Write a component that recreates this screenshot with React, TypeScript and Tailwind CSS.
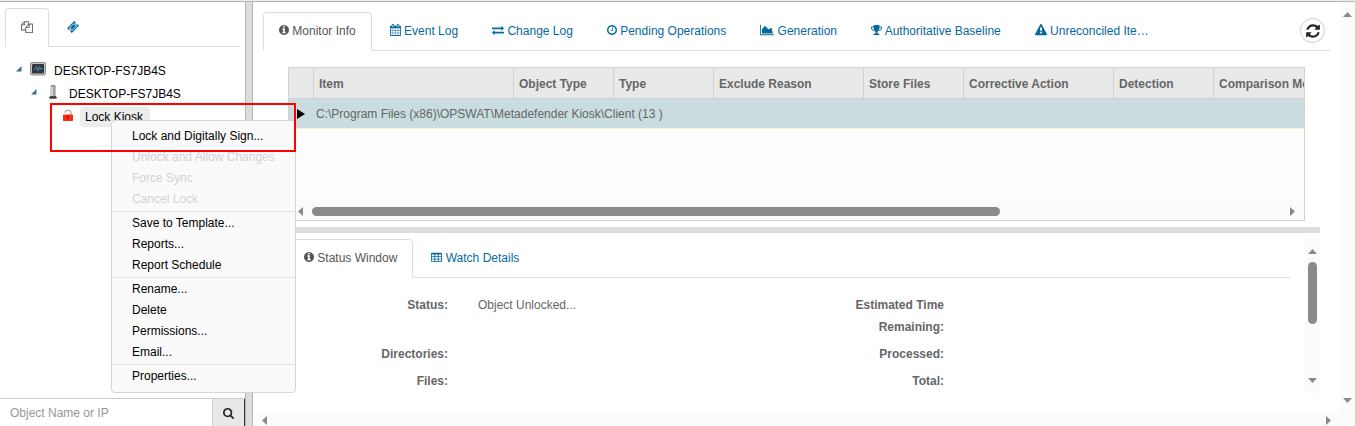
import type { ReactNode } from "react"
import clsx from "clsx"

// Font Awesome 4 outlines, which react-icons no longer ships
const icons = {
  info: {
    box: "128 0 1536 1792",
    size: "w-[10px]",
    d: "M1152 1376v-160q0-14-9-23t-23-9h-96v-512q0-14-9-23t-23-9h-320q-14 0-23 9t-9 23v160q0 14 9 23t23 9h96v320h-96q-14 0-23 9t-9 23v160q0 14 9 23t23 9h448q14 0 23-9t9-23zm-128-896v-160q0-14-9-23t-23-9h-192q-14 0-23 9t-9 23v160q0 14 9 23t23 9h192q14 0 23-9t9-23zm640 416q0 209-103 385.5t-279.5 279.5-385.5 103-385.5-103-279.5-279.5-103-385.5 103-385.5 279.5-279.5 385.5-103 385.5 103 279.5 279.5 103 385.5z",
  },
  calendar: {
    box: "64 0 1664 1792",
    size: "w-[11px]",
    d: "M192 1664h288v-288h-288v288zm352 0h320v-288h-320v288zm-352-352h288v-320h-288v320zm352 0h320v-320h-320v320zm-352-384h288v-288h-288v288zm736 736h320v-288h-320v288zm-384-736h320v-288h-320v288zm768 736h288v-288h-288v288zm-384-352h320v-320h-320v320zm-352-864v-288q0-13-9.5-22.5t-22.5-9.5h-64q-13 0-22.5 9.5t-9.5 22.5v288q0 13 9.5 22.5t22.5 9.5h64q13 0 22.5-9.5t9.5-22.5zm736 864h288v-320h-288v320zm-384-384h320v-288h-320v288zm384 0h288v-288h-288v288zm32-480v-288q0-13-9.5-22.5t-22.5-9.5h-64q-13 0-22.5 9.5t-9.5 22.5v288q0 13 9.5 22.5t22.5 9.5h64q13 0 22.5-9.5t9.5-22.5zm384-64v1280q0 52-38 90t-90 38h-1408q-52 0-90-38t-38-90v-1280q0-52 38-90t90-38h128v-96q0-66 47-113t113-47h64q66 0 113 47t47 113v96h384v-96q0-66 47-113t113-47h64q66 0 113 47t47 113v96h128q52 0 90 38t38 90z",
  },
  exchange: {
    box: "0 0 1792 1792",
    size: "w-[12px]",
    d: "M1792 1184v192q0 13-9.5 22.5t-22.5 9.5h-1376v192q0 13-9.5 22.5t-22.5 9.5q-12 0-24-10l-319-320q-9-9-9-22 0-14 9-23l320-320q9-9 23-9 13 0 22.5 9.5t9.5 22.5v192h1376q13 0 22.5 9.5t9.5 22.5zm0-544q0 14-9 23l-320 320q-9 9-23 9-13 0-22.5-9.5t-9.5-22.5v-192h-1376q-13 0-22.5-9.5t-9.5-22.5v-192q0-13 9.5-22.5t22.5-9.5h1376v-192q0-14 9-23t23-9q12 0 24 10l319 319q9 9 9 23z",
  },
  clock: {
    box: "128 0 1536 1792",
    size: "w-[10px]",
    d: "M1024 544v448q0 14-9 23t-23 9h-320q-14 0-23-9t-9-23v-64q0-14 9-23t23-9h224v-352q0-14 9-23t23-9h64q14 0 23 9t9 23zm416 352q0-148-73-273t-198-198-273-73-273 73-198 198-73 273 73 273 198 198 273 73 273-73 198-198 73-273zm224 0q0 209-103 385.5t-279.5 279.5-385.5 103-385.5-103-279.5-279.5-103-385.5 103-385.5 279.5-279.5 385.5-103 385.5 103 279.5 279.5 103 385.5z",
  },
  area: {
    box: "0 0 2048 1792",
    size: "w-[14px]",
    d: "M2048 1536v128h-2048v-1536h128v1408h1920zm-384-1024l256 896h-1664v-576l448-576 576 576z",
  },
  trophy: {
    box: "64 0 1664 1792",
    size: "w-[11px]",
    d: "M522 883q-74-162-74-371h-256v96q0 78 94.5 162t235.5 113zm1078-275v-96h-256q0 209-74 371 141-29 235.5-113t94.5-162zm128-128v128q0 71-41.5 143t-112 130-173 97.5-215.5 44.5q-42 54-95 95-38 34-52.5 72.5t-14.5 89.5q0 54 30.5 91t97.5 37q75 0 133.5 45.5t58.5 114.5v64q0 14-9 23t-23 9h-832q-14 0-23-9t-9-23v-64q0-69 58.5-114.5t133.5-45.5q67 0 97.5-37t30.5-91q0-51-14.5-89.5t-52.5-72.5q-53-41-95-95-113-5-215.5-44.5t-173-97.5-112-130-41.5-143v-128q0-40 28-68t68-28h288v-96q0-66 47-113t113-47h576q66 0 113 47t47 113v96h288q40 0 68 28t28 68z",
  },
  warning: {
    box: "0 0 1792 1792",
    size: "w-[12px]",
    d: "M1024 1375v-190q0-14-9.5-23.5t-22.5-9.5h-192q-13 0-22.5 9.5t-9.5 23.5v190q0 14 9.5 23.5t22.5 9.5h192q13 0 22.5-9.5t9.5-23.5zm-2-374l18-459q0-12-10-19-13-11-24-11h-220q-11 0-24 11-10 7-10 21l17 457q0 10 10 16.5t24 6.5h185q14 0 23.5-6.5t10.5-16.5zm-14-934l768 1408q35 63-2 126-17 29-46.5 46t-63.5 17h-1536q-34 0-63.5-17t-46.5-46q-37-63-2-126l768-1408q17-31 47-49t65-18 65 18 47 49z",
  },
  table: {
    box: "64 0 1664 1792",
    size: "w-[11px]",
    d: "M224 256h1344q160 0 160 160v1088q0 160-160 160h-1344q-160 0-160-160v-1088q0-160 160-160zM192 512v256h384v-256zM704 512v256h384v-256zM1216 512v256h384v-256zM192 896v256h384v-256zM704 896v256h384v-256zM1216 896v256h384v-256zM192 1280v256h384v-256zM704 1280v256h384v-256zM1216 1280v256h384v-256z",
  },
  refresh: {
    box: "128 0 1536 1792",
    size: "w-[14px]",
    d: "M1639 1056q0 5-1 7-64 268-268 434.5t-478 166.5q-146 0-282.5-55t-243.5-157l-129 129q-19 19-45 19t-45-19-19-45v-448q0-26 19-45t45-19h448q26 0 45 19t19 45-19 45l-137 137q71 66 161 102t187 36q134 0 250-65t186-179q11-17 53-117 8-23 30-23h192q13 0 22.5 9.5t9.5 22.5zm25-800v448q0 26-19 45t-45 19h-448q-26 0-45-19t-19-45 19-45l138-138q-148-137-349-137-134 0-250 65t-186 179q-11 17-53 117-8 23-30 23h-199q-13 0-22.5-9.5t-9.5-22.5v-7q65-268 270-434.5t480-166.5q146 0 284 55.5t245 156.5l130-129q19-19 45-19t45 19 19 45z",
  },
  search: {
    box: "64 0 1664 1792",
    size: "w-[11px]",
    d: "M1216 832q0-185-131.5-316.5t-316.5-131.5-316.5 131.5-131.5 316.5 131.5 316.5 316.5 131.5 316.5-131.5 131.5-316.5zm512 832q0 52-38 90t-90 38q-54 0-90-38l-343-342q-179 124-399 124-143 0-273.5-55.5t-225-150-150-225-55.5-273.5 55.5-273.5 150-225 225-150 273.5-55.5 273.5 55.5 225 150 150 225 55.5 273.5q0 220-124 399l343 343q37 37 37 90z",
  },
  files: {
    box: "0 0 1792 1792",
    size: "w-[12px]",
    d: "M1696 384q40 0 68 28t28 68v1216q0 40-28 68t-68 28h-960q-40 0-68-28t-28-68v-288h-544q-40 0-68-28t-28-68v-672q0-40 20-88t48-76l408-408q28-28 76-48t88-20h416q40 0 68 28t28 68v328q68-40 128-40h416zm-544 213l-299 299h299v-299zm-640-384l-299 299h299v-299zm196 647l316-316v-416h-384v416q0 40-28 68t-68 28h-416v640h512v-256q0-40 20-88t48-76zm956 804v-1152h-384v416q0 40-28 68t-68 28h-416v640h896z",
  },
  ticket: {
    box: "0 0 1792 1792",
    size: "w-[12px]",
    d: "M1024 452l316 316-572 572-316-316zm-211 979l618-618q19-19 19-45t-19-45l-362-362q-18-18-45-18t-45 18l-618 618q-19 19-19 45t19 45l362 362q18 18 45 18t45-18zm889-637l-907 908q-37 37-90.5 37t-90.5-37l-126-126q56-56 56-136t-56-136-136-56-136 56l-125-126q-37-37-37-90.5t37-90.5l907-906q37-37 90.5-37t90.5 37l125 125q-56 56-56 136t56 136 136 56 136-56l126 125q37 37 37 90.5t-37 90.5z",
  },
}

type IconName = keyof typeof icons

function Icon({ name, className = "h-3" }: { name: IconName; className?: string }) {
  const icon = icons[name]
  return (
    <svg viewBox={icon.box} className={clsx("inline-block shrink-0 fill-current", icon.size, className)} aria-hidden="true">
      <path fillRule="evenodd" d={icon.d} />
    </svg>
  )
}

function Tab({ icon, label, active }: { icon: IconName; label: string; active?: boolean }) {
  return (
    <button
      type="button"
      role="tab"
      aria-selected={!!active}
      className={clsx(
        "-mb-px h-[39px] rounded-t border px-[15px] pb-[2px] whitespace-nowrap",
        active ? "border-[#ddd] border-b-white bg-white text-[#555]" : "border-transparent text-[#0769a0]"
      )}
    >
      <Icon name={icon} className="h-3 align-[-1px]" /> {label}
    </button>
  )
}

function Arrow({ dir }: { dir: "up" | "down" | "left" | "right" }) {
  const vertical = dir === "up" || dir === "down"
  const points = {
    up: "0,5 9,5 4.5,0",
    down: "0,0 9,0 4.5,5",
    left: "5,0 5,9 0,4.5",
    right: "0,0 0,9 5,4.5",
  }
  return (
    <svg
      viewBox={vertical ? "0 0 9 5" : "0 0 5 9"}
      className={clsx("shrink-0 fill-[#8a8a8a]", vertical ? "h-[5px] w-[9px]" : "h-[9px] w-[5px]")}
      aria-hidden="true"
    >
      <polygon points={points[dir]} />
    </svg>
  )
}

function Expander() {
  return (
    <svg viewBox="0 0 6 6" className="h-[6px] w-[6px] shrink-0 -translate-y-[2px]" aria-hidden="true">
      <path d="M5.5 0v5.5H0z" fill="#3f6f8c" />
    </svg>
  )
}

function MonitorIcon() {
  return (
    <svg viewBox="0 0 16 14" className="h-[14px] w-[16px] shrink-0 -translate-y-[2px]" aria-hidden="true">
      <rect x=".5" y=".5" width="15" height="12.500" rx="1.5" fill="#c4c4c4" stroke="#8d8d8d" />
      <rect x="2" y="2" width="12" height="9.5" rx="1" fill="#33383c" />
      <path d="M4 7h1.500l1-2.500 1.500 4.500 1.500-4.500 1 3 .5-1H12.500" fill="none" stroke="#4a86ad" />
    </svg>
  )
}

function ServerIcon() {
  return (
    <svg viewBox="0 0 8 14" className="h-[14px] w-[8px] shrink-0 -translate-y-[2px]" aria-hidden="true">
      <path d="M1.500 1l1-1h3.500l.7 1v11H1.500z" fill="#a3a3a3" />
      <path d="M2 1.500h2V11H2z" fill="#cfcfcf" />
      <path d="M2 .3h4v1.200H2z" fill="#8a8a8a" />
      <path d="M0 12.500l1.500-1.500h5L8 12.500l-.8 1.200H.8z" fill="#444" />
    </svg>
  )
}

function UnlockIcon() {
  return (
    <svg viewBox="0 0 10 12" className="h-[12px] w-[10px] shrink-0 -translate-y-[2px]" aria-hidden="true">
      <path d="M2 3.800C2 .4 8 .4 8 3.600V6" fill="none" stroke="#b5b5b5" strokeWidth="1.500" />
      <rect x="0" y="5.500" width="10" height="6.500" rx=".8" fill="#fb2c0c" />
      <circle cx="5" cy="8" r="1" fill="#8c1a08" />
      <path d="M4.600 8h.8v2.300h-.8z" fill="#8c1a08" />
    </svg>
  )
}

const menuGroups = [
  [
    { label: "Lock and Digitally Sign..." },
    { label: "Unlock and Allow Changes", disabled: true },
    { label: "Force Sync", disabled: true },
    { label: "Cancel Lock", disabled: true },
  ],
  [{ label: "Save to Template..." }, { label: "Reports..." }, { label: "Report Schedule" }],
  [{ label: "Rename..." }, { label: "Delete" }, { label: "Permissions..." }, { label: "Email..." }],
  [{ label: "Properties..." }],
]

function ContextMenu() {
  return (
    <div
      role="menu"
      className="absolute top-[120px] left-[111px] z-10 w-[185px] rounded border border-[#d5d5d5] bg-[#fafafa] px-px pt-[4px] pb-[6px]"
    >
      {menuGroups.map((group, i) => (
        <div key={i} className={clsx(i > 0 && "mt-[2px] border-t border-[#e2e2e2]")}>
          {group.map((item: { label: string; disabled?: boolean }) => (
            <button
              key={item.label}
              type="button"
              role="menuitem"
              disabled={item.disabled}
              className="block h-[21px] w-full pl-[19px] text-left whitespace-nowrap text-black disabled:text-[#d3d3d3]"
            >
              {item.label}
            </button>
          ))}
        </div>
      ))}
    </div>
  )
}

function Sidebar() {
  return (
    <aside className="flex w-[245px] shrink-0 flex-col">
      <div role="tablist" className="mt-[6px] mr-[6px] ml-[5px] flex border-b border-[#ddd]">
        <button
          type="button"
          role="tab"
          aria-selected="true"
          aria-label="Objects"
          className="-mb-px flex h-[39px] w-[44px] items-center justify-center rounded-t border border-[#ddd] border-b-white pb-[2px] text-[#555]"
        >
          <Icon name="files" />
        </button>
        <button
          type="button"
          role="tab"
          aria-selected="false"
          aria-label="Tickets"
          className="ml-[2px] flex h-[37px] w-[44px] items-center justify-center text-[#0769a0]"
        >
          <Icon name="ticket" />
        </button>
      </div>

      <ul role="tree" className="mt-[12px] flex-1 text-black">
        <li role="treeitem" className="flex h-[23px] items-center pl-[16px]">
          <Expander />
          <span className="ml-[8px] flex items-center gap-[8px]">
            <MonitorIcon />
            DESKTOP-FS7JB4S
          </span>
        </li>
        <li role="treeitem" className="flex h-[23px] items-center pl-[31px]">
          <Expander />
          <span className="ml-[12px] flex items-center gap-[12px]">
            <ServerIcon />
            DESKTOP-FS7JB4S
          </span>
        </li>
        <li role="treeitem" aria-selected="true" className="flex h-[23px] items-center pl-[63px]">
          <UnlockIcon />
          <span className="ml-[7px] rounded bg-[#ececec] pr-[7px] pl-[5px] leading-5">Lock Kiosk</span>
        </li>
      </ul>

      <form className="flex h-[28px] border-t border-[#ccc]">
        <input
          type="text"
          aria-label="Object Name or IP"
          placeholder="Object Name or IP"
          className="min-w-0 flex-1 bg-white px-[10px] outline-none placeholder:text-[#999]"
        />
        <button
          type="button"
          aria-label="Search"
          className="flex w-[33px] items-center justify-center border-r border-l border-r-[#333] border-l-[#ccc] bg-[#e8e8e8] text-[#222]"
        >
          <Icon name="search" />
        </button>
      </form>
    </aside>
  )
}

const columns = [
  { label: "", width: "w-[25px]" },
  { label: "Item", width: "w-[200px]" },
  { label: "Object Type", width: "w-[100px]" },
  { label: "Type", width: "w-[100px]" },
  { label: "Exclude Reason", width: "w-[150px]" },
  { label: "Store Files", width: "w-[100px]" },
  { label: "Corrective Action", width: "w-[150px]" },
  { label: "Detection", width: "w-[100px]" },
  { label: "Comparison Method", width: "w-[150px]" },
]

function ItemGrid() {
  return (
    <div className="flex h-[154px] flex-col overflow-hidden border border-[#d0d0d0] bg-[#fdfdfd]">
      <div className="flex-1 overflow-hidden">
        <table className="w-[1075px] table-fixed border-separate border-spacing-0">
          <thead>
            <tr className="h-[31px] bg-[#e9e9e9]">
              {columns.map((col) => (
                <th
                  key={col.label}
                  className={clsx(
                    "border-r border-b border-[#d0d0d0] pt-[2px] pl-[5px] text-left whitespace-nowrap",
                    col.width
                  )}
                >
                  {col.label}
                </th>
              ))}
            </tr>
          </thead>
          <tbody>
            <tr className="h-[30px] bg-[#c9dce0]">
              <td colSpan={9} className="border-b border-[#f5f5d5] pl-[8px]">
                <div className="flex items-center gap-[11px]">
                  <svg viewBox="0 0 8 10" className="h-[10px] w-[8px] fill-black" aria-hidden="true">
                    <polygon points="0,0 8,5 0,10" />
                  </svg>
                  C:\Program Files (x86)\OPSWAT\Metadefender Kiosk\Client (13 )
                </div>
              </td>
            </tr>
          </tbody>
        </table>
      </div>
      <div className="flex h-[17px] items-center bg-[#fbfbfb] pr-[9px] pl-[9px]">
        <Arrow dir="left" />
        <div className="mx-[9px] flex-1">
          <div className="h-[9px] w-[71%] rounded-full bg-[#8a8a8a]" />
        </div>
        <Arrow dir="right" />
      </div>
    </div>
  )
}

function Label({ children }: { children: ReactNode }) {
  return <dt className="pr-[15px] pl-[55px] text-right font-bold">{children}</dt>
}

function StatusPane() {
  return (
    <div className="mt-[6px] flex h-[154px]">
      <div className="min-w-0 flex-1">
        <div role="tablist" className="mr-[15px] flex gap-[2px] border-b border-[#ddd]">
          <Tab icon="info" label="Status Window" active />
          <Tab icon="table" label="Watch Details" />
        </div>
        <dl className="mt-[16px] mr-[25px] grid grid-cols-[175px_1fr_175px_1fr] gap-y-[5px] leading-[22px]">
          <Label>Status:</Label>
          <dd className="pl-[15px]">Object Unlocked...</dd>
          <Label>Estimated Time Remaining:</Label>
          <dd />
          <Label>Directories:</Label>
          <dd />
          <Label>Processed:</Label>
          <dd />
          <Label>Files:</Label>
          <dd />
          <Label>Total:</Label>
          <dd />
        </dl>
      </div>
      <div className="flex w-[15px] flex-col items-center bg-[#fbfbfb] pt-[10px] pb-[10px]">
        <Arrow dir="up" />
        <div className="mt-[8px] flex-1">
          <div className="h-[62px] w-[9px] rounded-full bg-[#8a8a8a]" />
        </div>
        <Arrow dir="down" />
      </div>
    </div>
  )
}

export default function App() {
  return (
    <div className="relative flex h-screen flex-col overflow-hidden bg-white font-['Liberation_Sans',Arial,sans-serif] text-xs text-[#666]">
      <div className="h-[2px] shrink-0 border-b border-[#b8b8b8] bg-[#ececec]" />
      <div className="flex min-h-0 flex-1">
        <Sidebar />
        <div className="w-[8px] shrink-0 border-x border-[#b5b5b5] bg-[#ddd]" />

        <main className="flex min-w-0 flex-1">
          <div className="flex min-w-0 flex-1 flex-col">
            <div className="min-h-0 flex-1 overflow-hidden pt-[10px] pr-[10px] pl-[10px]">
              <div role="tablist" className="flex gap-[2px] border-b border-[#ddd]">
                <Tab icon="info" label="Monitor Info" active />
                <Tab icon="calendar" label="Event Log" />
                <Tab icon="exchange" label="Change Log" />
                <Tab icon="clock" label="Pending Operations" />
                <Tab icon="area" label="Generation" />
                <Tab icon="trophy" label="Authoritative Baseline" />
                <Tab icon="warning" label="Unreconciled Ite…" />
                <button
                  type="button"
                  aria-label="Refresh"
                  className="mt-[6px] mr-[5px] ml-auto flex h-[25px] w-[25px] items-center justify-center rounded-full border border-[#ccc] text-[#222]"
                >
                  <Icon name="refresh" className="h-4" />
                </button>
              </div>

              <div className="mt-[16px] mr-[10px] ml-[25px]">
                <div className="mr-[15px]">
                  <ItemGrid />
                </div>
                <div className="mt-[6px] h-[6px] bg-[#ddd]" />
                <StatusPane />
              </div>
            </div>
            <div className="flex h-[13px] shrink-0 items-center justify-between bg-[#fbfbfb] pt-[2px] pr-[9px] pl-[9px]">
              <Arrow dir="left" />
              <Arrow dir="right" />
            </div>
          </div>
          <div className="flex w-[15px] shrink-0 flex-col items-center justify-between bg-[#fbfbfb] pt-[10px] pb-[23px]">
            <Arrow dir="up" />
            <Arrow dir="down" />
          </div>
        </main>
      </div>

      <ContextMenu />
      <div className="pointer-events-none absolute top-[103px] left-[50px] z-20 h-[49px] w-[246px] border-2 border-[#f00]" />
    </div>
  )
}
